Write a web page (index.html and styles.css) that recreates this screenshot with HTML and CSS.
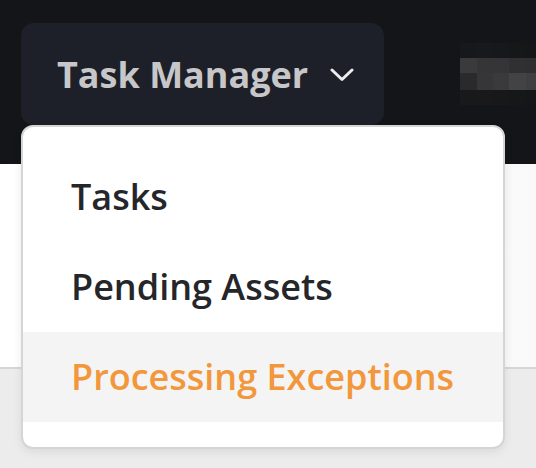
FILE: index.html
```html
<!DOCTYPE html>
<html>
<head>
<meta charset="utf-8">
<link rel="stylesheet" href="styles.css">
</head>
<body>
<header class="topbar">
  <div class="nav-wrap">
    <button class="nav-btn">
      <span class="nav-label">Task Manager</span>
      <svg class="chev" width="24" height="14" viewBox="0 0 24 14"><path d="M2 2 L12 11.5 L22 2" fill="none" stroke="#ececec" stroke-width="3" stroke-linecap="round" stroke-linejoin="round"/></svg>
    </button>
    <div class="menu">
      <div class="menu-item">Tasks</div>
      <div class="menu-item">Pending Assets</div>
      <div class="menu-item active">Processing Exceptions</div>
    </div>
  </div>
  <div class="mosaic">
    <i style="background:#17181b"></i><i style="background:#18191c"></i><i style="background:#17181b"></i><i style="background:#161719"></i><i style="background:#151618"></i>
    <i style="background:#3a3a3c"></i><i style="background:#353537"></i><i style="background:#353537"></i><i style="background:#303032"></i><i style="background:#2f2f31"></i>
    <i style="background:#2a2a2c"></i><i style="background:#363638"></i><i style="background:#3a3a3c"></i><i style="background:#434345"></i><i style="background:#3f3f41"></i>
    <i style="background:#18191b"></i><i style="background:#19191c"></i><i style="background:#18181b"></i><i style="background:#161719"></i><i style="background:#151618"></i>
  </div>
</header>
<section class="band"></section>
<section class="rest"></section>
</body>
</html>
```
FILE: styles.css
```css
* { box-sizing: border-box; }
html, body { margin: 0; padding: 0; }
body {
  width: 536px;
  height: 468px;
  overflow: hidden;
  background: #ececec;
  font-family: "Open Sans", "Noto Sans", sans-serif;
}
.topbar {
  height: 164px;
  background: #141518;
  display: flex;
  align-items: flex-start;
  padding: 23px 0 0 21px;
  position: relative;
  z-index: 2;
}
.nav-wrap {
  position: relative;
}
.nav-btn {
  height: 102px;
  width: 363px;
  border: 0;
  border-radius: 13px;
  background: #1e2029;
  display: flex;
  align-items: center;
  padding: 0 0 0 36px;
  gap: 22px;
  font-family: inherit;
  cursor: pointer;
}
.nav-label {
  font-size: 36px;
  font-weight: 700;
  color: #c7c7c9;
  line-height: 49px;
}
.chev { display: block; margin-top: 2px; }
.menu {
  position: absolute;
  top: 102px;
  left: 0;
  width: 484px;
  background: #fff;
  border: 2px solid #d5d5d5;
  border-radius: 12px;
  padding: 25px 0;
  box-shadow: 0 3px 10px rgba(0,0,0,0.08);
}
.menu-item {
  height: 90px;
  line-height: 90px;
  padding-left: 48px;
  font-size: 36px;
  font-weight: 600;
  color: #25262a;
  white-space: nowrap;
}
.menu-item.active {
  background: #f4f4f4;
  color: #f2973b;
}
.mosaic {
  position: absolute;
  left: 460px;
  top: 43px;
  display: grid;
  grid-template-columns: 17px 16px 16px 17px 16px;
  grid-template-rows: 15px 15px 17px 15px;
}
.mosaic i { display: block; }
.band {
  height: 205px;
  background: linear-gradient(90deg, #ffffff, #f9f9f9);
  border-bottom: 2px solid #d6d6d6;
}
.rest {
  height: 99px;
  background: #ececec;
}
```
